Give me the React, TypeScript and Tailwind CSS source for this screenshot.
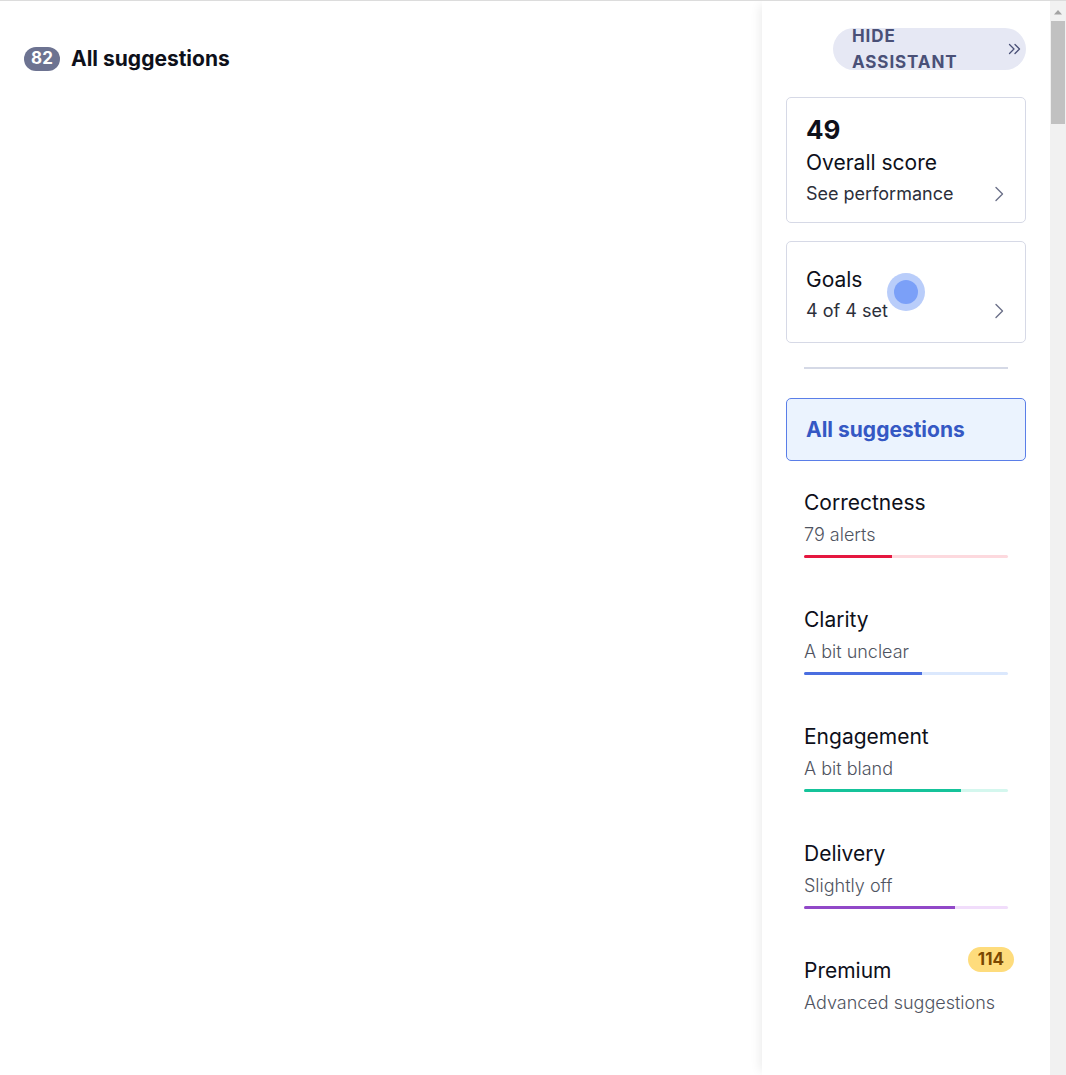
import React from 'react';

interface Category {
  title: string;
  subtitle: string;
  fill: number;
  bar: string;
  track: string;
}

const categories: Category[] = [
  { title: 'Correctness', subtitle: '79 alerts', fill: 43, bar: 'bg-[#e5173f]', track: 'bg-[#fdd9de]' },
  { title: 'Clarity', subtitle: 'A bit unclear', fill: 58, bar: 'bg-[#4a6ee0]', track: 'bg-[#dbe8fd]' },
  { title: 'Engagement', subtitle: 'A bit bland', fill: 77, bar: 'bg-[#15c39a]', track: 'bg-[#d4f7ee]' },
  { title: 'Delivery', subtitle: 'Slightly off', fill: 74, bar: 'bg-[#9148c8]', track: 'bg-[#f1ddfb]' },
];

const Chevron = () => (
  <svg width="10" height="16" viewBox="0 0 10 16" fill="none" className="shrink-0">
    <path d="M2 1.5 L8.5 8 L2 14.5" stroke="#6b7089" strokeWidth="1.4" strokeLinecap="round" strokeLinejoin="round" />
  </svg>
);

const App: React.FC = () => {
  return (
    <div
      className="h-screen w-full flex border-t border-[#dcdcdc] bg-white text-[#0e101a] overflow-hidden"
      style={{ fontFamily: 'Inter, "Noto Sans", sans-serif' }}
    >
      <div className="flex-1 pt-[42px] pl-[24px]">
        <div className="flex items-center gap-[11px]">
          <span className="h-[24px] w-[36px] rounded-full bg-[#6d7391] text-white text-[17px] font-bold flex items-center justify-center leading-none">
            82
          </span>
          <span className="text-[21px] font-bold">All suggestions</span>
        </div>
      </div>

      <div className="w-[288px] h-full shadow-[-6px_0_10px_-4px_rgba(0,0,0,0.08)] px-[24px] pt-[27px]">
        <div className="flex justify-end">
          <button className="relative w-[193px] h-[42px] rounded-full bg-[#e6e8f4] overflow-hidden text-left pl-[19px]">
            <span className="block text-[17px] font-bold tracking-[0.9px] leading-[26px] text-[#4a5077] -mt-[5px]">
              HIDE
              <br />
              ASSISTANT
            </span>
            <svg width="14" height="12" viewBox="0 0 14 12" fill="none" className="absolute right-[4px] top-[15px]">
              <path d="M1.5 1.5 L6 6 L1.5 10.5" stroke="#4a5077" strokeWidth="1.3" strokeLinecap="round" strokeLinejoin="round" />
              <path d="M7 1.5 L11.5 6 L7 10.5" stroke="#4a5077" strokeWidth="1.3" strokeLinecap="round" strokeLinejoin="round" />
            </svg>
          </button>
        </div>

        <div className="mt-[27px] h-[126px] border border-[#d6d9e6] rounded-[5px] pt-[16px] px-[19px]">
          <div className="text-[26px] font-bold leading-[32px]">49</div>
          <div className="text-[21px] leading-[30px] mt-[2px]">Overall score</div>
          <div className="flex items-center justify-between pr-[2px] mt-[4px]">
            <span className="text-[18px] leading-[24px] text-[#2c2f3a]">See performance</span>
            <Chevron />
          </div>
        </div>

        <div className="relative mt-[18px] h-[102px] border border-[#d6d9e6] rounded-[5px] pt-[23px] px-[19px]">
          <div className="text-[21px] leading-[30px]">Goals</div>
          <div className="flex items-center justify-between pr-[2px] mt-[4px]">
            <span className="text-[18px] leading-[24px] text-[#2c2f3a]">4 of 4 set</span>
            <Chevron />
          </div>
          <span className="absolute left-[100px] top-[31px] w-[38px] h-[38px] rounded-full bg-[#b9cdfa] flex items-center justify-center">
            <span className="w-[24px] h-[24px] rounded-full bg-[#7ba0f8]" />
          </span>
        </div>

        <div className="mx-[18px] mt-[24px] h-[2px] bg-[#d5d9e6]" />

        <div className="mt-[29px] h-[63px] border border-[#5a7ee8] bg-[#ebf3fe] rounded-[5px] px-[19px] flex items-center">
          <span className="text-[21px] font-bold text-[#3558c4]">All suggestions</span>
        </div>

        <div className="px-[18px] pt-[27px]">
          {categories.map((c) => (
            <div key={c.title} className="h-[117px]">
              <div className="text-[21px] leading-[30px]">{c.title}</div>
              <div className="text-[18px] leading-[24px] mt-[5px] text-[#4f5461] font-light">{c.subtitle}</div>
              <div className={`mt-[8px] h-[3px] rounded-full flex overflow-hidden ${c.track}`}>
                <div className={`h-full ${c.bar}`} style={{ width: `${c.fill}%` }} />
              </div>
            </div>
          ))}
          <div className="relative">
            <div className="text-[21px] leading-[30px]">Premium</div>
            <div className="text-[18px] leading-[24px] mt-[5px] text-[#4f5461] font-light">Advanced suggestions</div>
            <span className="absolute -right-[6px] -top-[9px] h-[25px] px-[10px] rounded-full bg-[#fedc7c] text-[#7a4800] text-[17px] font-bold flex items-center">
              114
            </span>
          </div>
        </div>
      </div>

      <div className="w-[16px] h-full bg-[#f1f1f1] flex flex-col items-center">
        <svg width="10" height="8" viewBox="0 0 10 8" className="mt-[7px]">
          <path d="M1 6.5 L5 2 L9 6.5 Z" fill="#a3a3a3" />
        </svg>
        <div className="mt-[5px] w-[14px] h-[103px] bg-[#c1c1c1]" />
      </div>
    </div>
  );
};

export default App;
